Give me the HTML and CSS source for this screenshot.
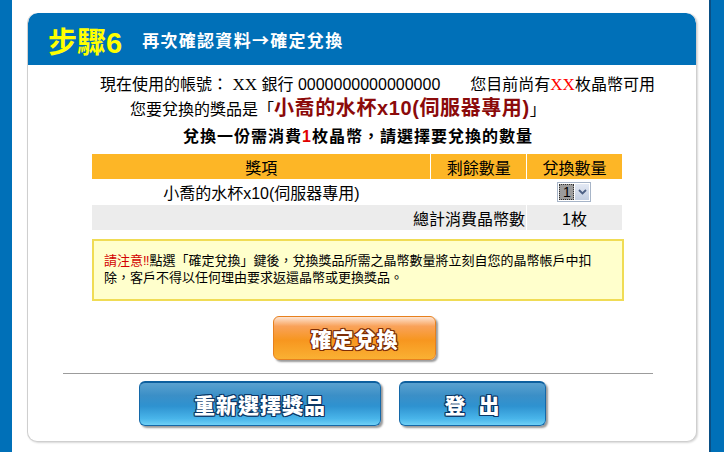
FILE: index.html
```html
<!DOCTYPE html>
<html lang="zh-Hant">
<head>
    <meta charset="UTF-8">
    <meta name="viewport" content="width=device-width, initial-scale=1.0">
    <title>步驟6 再次確認資料</title>
    <link rel="stylesheet" href="styles.css">
</head>
<body>
    <div class="page">
        <div class="side-left"></div>
        <div class="main">
            <div class="card">
                <div class="card-head">
                    <span class="step">步驟6</span>
                    <span class="step-title">再次確認資料→確定兌換</span>
                </div>
                <div class="card-body">
                    <p class="line line-account">現在使用的帳號： <span class="serif">XX</span> 銀行 0000000000000000<span class="gap"></span>您目前尚有<span class="serif red">XX</span>枚晶幣可用</p>
                    <p class="line line-prize">您要兌換的獎品是「<strong class="prize">小喬的水杯x10(伺服器專用)</strong>」</p>
                    <p class="line line-cost">兌換一份需消費<span class="red">1</span>枚晶幣，請選擇要兌換的數量</p>

                    <table class="prize-table">
                        <tr class="head-row">
                            <th class="col-item">獎項</th>
                            <th class="col-left">剩餘數量</th>
                            <th class="col-qty">兌換數量</th>
                        </tr>
                        <tr class="item-row">
                            <td>小喬的水杯x10(伺服器專用)</td>
                            <td></td>
                            <td>
                                <span class="fake-select"><span class="fake-value">1</span><span class="fake-arrow">
                                    <svg width="9" height="6" viewBox="0 0 9 6"><path d="M1 1 L4.5 4.5 L8 1" fill="none" stroke="#4d6185" stroke-width="1.8"/></svg>
                                </span></span>
                            </td>
                        </tr>
                        <tr class="total-row">
                            <td colspan="2" class="total-label">總計消費晶幣數</td>
                            <td>1枚</td>
                        </tr>
                    </table>

                    <div class="notice">
                        <span class="red">請注意‼</span>點選「確定兌換」鍵後，兌換獎品所需之晶幣數量將立刻自您的晶幣帳戶中扣<br>除，客戶不得以任何理由要求返還晶幣或更換獎品。
                    </div>

                    <div class="confirm-row">
                        <a class="btn btn-orange btn-confirm" href="#">確定兌換</a>
                    </div>

                    <div class="divider"></div>

                    <div class="bottom-row">
                        <a class="btn btn-blue btn-reselect" href="#">重新選擇獎品</a>
                        <a class="btn btn-blue btn-logout" href="#">登<span class="word-gap"></span>出</a>
                    </div>
                </div>
            </div>
        </div>
        <div class="side-right"></div>
    </div>
</body>
</html>
```

FILE: styles.css
```css
html, body {
    margin: 0;
    height: 100%;
    background: #fff;
}
body {
    font-family: "Liberation Sans", "Noto Sans CJK TC", sans-serif;
    color: #000;
}
.page {
    display: flex;
    height: 452px;
    overflow: hidden;
}
.side-left {
    width: 12px;
    background: #0070b8;
}
.side-right {
    width: 13px;
    background: #0070b8;
    border-left: 2px solid #0a4f85;
}
.main {
    flex: 1;
    padding: 13px 12px 0 15px;
}
.card {
    height: 428px;
    border: 1px solid #cfcfcf;
    border-top: none;
    border-radius: 10px;
    box-shadow: 1px 1px 2px #d8d8d8;
    overflow: hidden;
    background: #fff;
}
.card-head {
    height: 52px;
    background: #0070b8;
    display: flex;
    align-items: center;
    padding-left: 20px;
    border-radius: 10px 10px 0 0;
}
.step {
    color: #ffff00;
    font-weight: 700;
    font-size: 29px;
    margin-right: 20px;
    margin-top: 2px;
}
.step-title {
    font-family: "Noto Sans CJK TC", sans-serif;
    color: #fff;
    font-weight: 700;
    font-size: 17px;
    letter-spacing: 1.3px;
}
.card-body {
    padding-top: 9px;
}
.line {
    margin: 0;
    white-space: nowrap;
}
.line-account {
    font-size: 16px;
    line-height: 22px;
    padding-left: 72px;
}
.gap {
    display: inline-block;
    width: 30px;
}
.serif {
    font-family: "Liberation Serif", "Noto Sans CJK TC", serif;
    font-size: 17px;
}
.red {
    color: #ff0000;
}
.line-prize {
    font-size: 16px;
    line-height: 24px;
    padding-left: 102px;
}
.prize {
    color: #8b0a0a;
    font-size: 20px;
    letter-spacing: 0.6px;
}
.line-cost {
    font-size: 16px;
    font-weight: 700;
    line-height: 22px;
    margin-top: 4px;
    padding-left: 155px;
    letter-spacing: 1px;
}
.line-cost .red {
    color: #e00000;
}
.prize-table {
    margin: 6px 0 0 64px;
    width: 530px;
    border-collapse: collapse;
    font-size: 16px;
}
.prize-table th {
    background: #fdb626;
    font-weight: 400;
    height: 25px;
    padding: 0;
}
.prize-table th + th {
    border-left: 1px solid #fff;
}
.col-item { width: 339px; }
.col-left { width: 95px; }
.col-qty { width: 95px; }
.prize-table td {
    padding: 0;
    text-align: center;
}
.item-row td {
    height: 26px;
}
.total-row td {
    height: 25px;
    background: #ececec;
}
.total-row td + td {
    border-left: 1px solid #fff;
}
.total-label {
    text-align: right !important;
    padding-right: 1px !important;
}
.fake-select {
    display: inline-flex;
    border: 1px solid #a7b5c8;
    background: #fff;
    vertical-align: middle;
    padding: 1px;
    box-sizing: border-box;
    width: 34px;
    height: 20px;
}
.fake-value {
    width: 15px;
    background: #9c9c9c;
    outline: 1px dotted #333;
    outline-offset: -1px;
    font-size: 14px;
    line-height: 16px;
    color: #000;
}
.fake-arrow {
    flex: 1;
    margin-left: 1px;
    background: linear-gradient(#e3e9f4, #c3cfe2);
    display: flex;
    align-items: center;
    justify-content: center;
}
.notice {
    margin: 9px 0 0 64px;
    width: 532px;
    height: 62px;
    box-sizing: border-box;
    border: 2px solid #f0dc55;
    background: #ffffcc;
    font-size: 13px;
    line-height: 17px;
    padding: 11px 0 0 10px;
    white-space: nowrap;
}
.notice .red {
    color: #d20000;
}
.confirm-row {
    display: flex;
    padding: 15px 0 0 245px;
}
.btn {
    display: flex;
    align-items: center;
    justify-content: center;
    box-sizing: border-box;
    height: 45px;
    border-radius: 6px;
    text-decoration: none;
    color: #fff;
    font-weight: 900;
    font-size: 21px;
    letter-spacing: 1px;
    box-shadow: 2px 2px 2px #9a9a9a;
}
.btn-orange {
    width: 163px;
    height: 44px;
    border: 1px solid #e7801e;
    background: linear-gradient(#fde4d2 0%, #f9a25a 22%, #f7961f 55%, #fab133 100%);
    text-shadow: 1px 0 0 #7c2c06, -1px 0 0 #7c2c06, 0 1px 0 #7c2c06, 0 -1px 0 #7c2c06, 1px 1px 0 #7c2c06, -1px -1px 0 #7c2c06, 1px -1px 0 #7c2c06, -1px 1px 0 #7c2c06;
}
.divider {
    margin: 13px 43px 0 35px;
    border-top: 1px solid #9c9c9c;
}
.bottom-row {
    display: flex;
    gap: 18px;
    padding: 7px 0 0 111px;
}
.btn-blue {
    border: 1px solid #1468a8;
    border-top: 2px solid #0d5f9e;
    background: linear-gradient(#5aa1cf 0%, #3b8fc7 30%, #2e92d0 55%, #49b5ea 85%, #6fd0f6 100%);
    text-shadow: 1px 0 0 #0b3766, -1px 0 0 #0b3766, 0 1px 0 #0b3766, 0 -1px 0 #0b3766, 1px 1px 0 #0b3766, -1px -1px 0 #0b3766, 1px -1px 0 #0b3766, -1px 1px 0 #0b3766;
}
.btn-reselect {
    width: 242px;
}
.btn-logout {
    width: 147px;
}
.word-gap {
    display: inline-block;
    width: 12px;
}
```
